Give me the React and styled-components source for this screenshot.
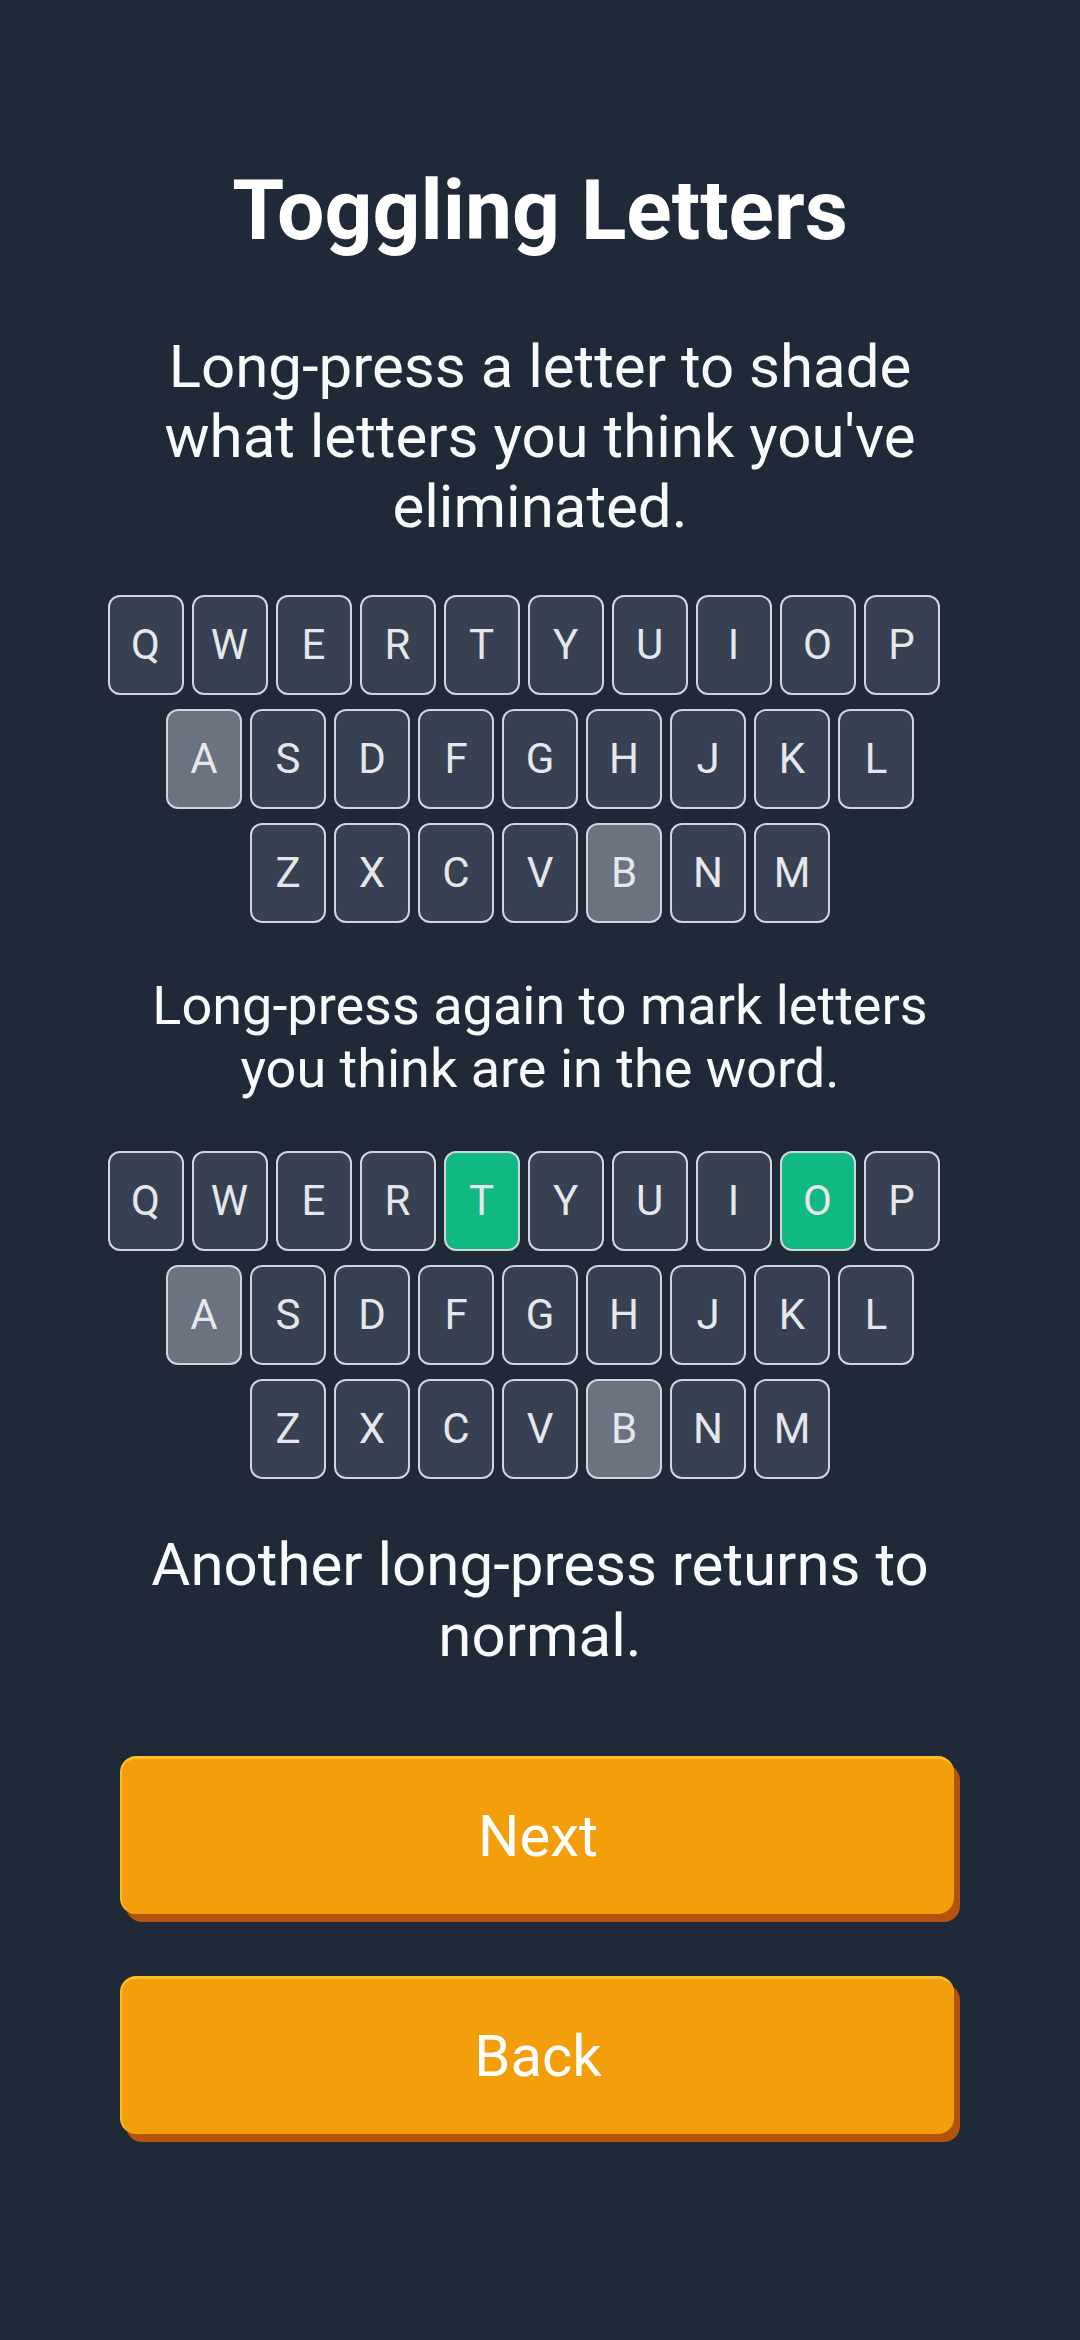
import styled, { createGlobalStyle } from 'styled-components';

const GlobalStyle = createGlobalStyle`
  html, body {
    margin: 0;
    padding: 0;
    background: #1f2937;
  }
  body {
    font-family: 'Roboto', 'Noto Sans', sans-serif;
    -webkit-font-smoothing: antialiased;
  }
  * {
    box-sizing: border-box;
  }
`;

const ROWS = ['QWERTYUIOP', 'ASDFGHJKL', 'ZXCVBNM'];

const FIRST = { A: 'shaded', B: 'shaded' };
const SECOND = { A: 'shaded', B: 'shaded', T: 'found', O: 'found' };

export default function App() {
  return (
    <>
      <GlobalStyle />
      <Screen>
        <Title>Toggling Letters</Title>

        <Text $size={60} $line={70} $top={70}>
          Long-press a letter to shade what letters you think you&apos;ve
          eliminated.
        </Text>

        <Keyboard marks={FIRST} top={53} />

        <Text $size={54} $line={63} $top={51}>
          Long-press again to mark letters you think are in the word.
        </Text>

        <Keyboard marks={SECOND} top={51} />

        <Text $size={60} $line={71} $top={50}>
          Another long-press returns to normal.
        </Text>

        <Actions>
          <Button type="button">Next</Button>
          <Button type="button">Back</Button>
        </Actions>
      </Screen>
    </>
  );
}

function Keyboard({ marks, top }) {
  return (
    <Board $top={top}>
      {ROWS.map((row, i) => (
        <KeyRow key={row} $wide={i === 0}>
          {row.split('').map((letter) => (
            <Key key={letter} $state={marks[letter]}>
              {letter}
            </Key>
          ))}
        </KeyRow>
      ))}
    </Board>
  );
}

const Screen = styled.main`
  min-height: 2340px;
  padding: 161px 120px 0;
  display: flex;
  flex-direction: column;
  align-items: center;
  color: #ffffff;
`;

const Title = styled.h1`
  margin: 0;
  font-size: 84px;
  line-height: 1.2;
  font-weight: 700;
  text-align: center;
  color: #ffffff;
`;

const Text = styled.p`
  margin: ${(p) => p.$top}px 0 0;
  align-self: stretch;
  font-size: ${(p) => p.$size}px;
  line-height: ${(p) => p.$line}px;
  font-weight: 400;
  text-align: center;
  color: #f9fafb;
`;

const Board = styled.div`
  margin-top: ${(p) => p.$top}px;
  display: flex;
  flex-direction: column;
  align-items: center;
  gap: 14px;
`;

const KeyRow = styled.div`
  display: flex;
  gap: 8px;
  margin-right: ${(p) => (p.$wide ? '33px' : '0')};
`;

const keyColors = {
  shaded: '#6b7280',
  found: '#10b981',
};

const Key = styled.div`
  width: 76px;
  height: 100px;
  display: flex;
  align-items: center;
  justify-content: center;
  border: 2px solid #d1d5db;
  border-radius: 12px;
  background: ${(p) => keyColors[p.$state] || '#374151'};
  color: #e5e7eb;
  font-size: 42px;
  font-weight: 400;
`;

const Actions = styled.div`
  align-self: stretch;
  margin-top: 85px;
  display: flex;
  flex-direction: column;
  gap: 62px;
`;

const Button = styled.button`
  width: calc(100% - 6px);
  height: 158px;
  padding: 0;
  border: none;
  border-top: 3px solid #fbbf24;
  border-left: 2px solid #fbbf24;
  border-radius: 16px;
  background: #f39e0b;
  box-shadow: 6px 8px 0 #b45309;
  color: #ffffff;
  font-family: 'Roboto', 'Noto Sans', sans-serif;
  font-size: 58px;
  font-weight: 400;
  cursor: pointer;
`;
